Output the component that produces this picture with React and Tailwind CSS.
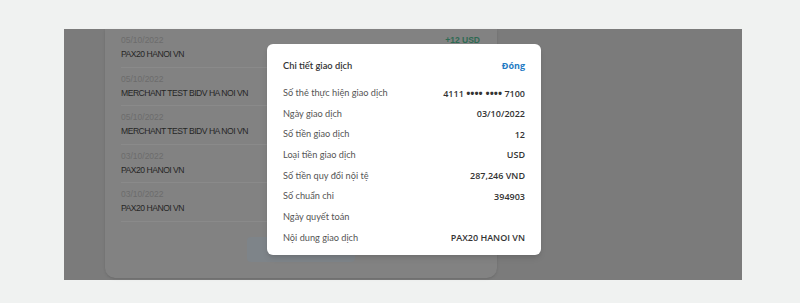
const items = [
  { date: "05/10/2022", name: "PAX20 HANOI VN", amount: "+12 USD" },
  { date: "05/10/2022", name: "MERCHANT TEST BIDV HA NOI VN", amount: "+12 USD" },
  { date: "05/10/2022", name: "MERCHANT TEST BIDV HA NOI VN", amount: "+12 USD" },
  { date: "03/10/2022", name: "PAX20 HANOI VN", amount: "+12 USD" },
  { date: "03/10/2022", name: "PAX20 HANOI VN", amount: "+12 USD" },
];

const details = [
  ["Số thẻ thực hiện giao dịch", "4111 •••• •••• 7100"],
  ["Ngày giao dịch", "03/10/2022"],
  ["Số tiền giao dịch", "12"],
  ["Loại tiền giao dịch", "USD"],
  ["Số tiền quy đổi nội tệ", "287,246 VND"],
  ["Số chuẩn chi", "394903"],
  ["Ngày quyết toán", ""],
  ["Nội dung giao dịch", "PAX20 HANOI VN"],
];

function DetailModal() {
  return (
    <div className="absolute left-[203px] top-[15px] w-[274px] h-[211px] bg-white rounded-[6px] shadow-md px-4 pt-3 font-['Lato',sans-serif]">
      <div className="flex items-center justify-between h-5">
        <span className="text-[9.3px] font-semibold text-[#333]">Chi tiết giao dịch</span>
        <span className="text-[9px] font-bold text-[#1f7bc4] font-['Open_Sans',sans-serif]">Đóng</span>
      </div>
      <div className="mt-[6.6px]">
        {details.map(([label, value]) => (
          <div key={label} className="flex items-center justify-between h-[20.7px]">
            <span className="text-[9.2px] text-[#555]">{label}</span>
            <span className="text-[9px] font-semibold text-[#333] font-['Open_Sans',sans-serif]">
              {value.includes("•") ? (
                <>
                  4111 <span className="text-[11px] font-bold">•••• ••••</span> 7100
                </>
              ) : (
                value
              )}
            </span>
          </div>
        ))}
      </div>
    </div>
  );
}

export default function App() {
  return (
    <div className="w-[800px] h-[303px] bg-[#f0f2f1] pt-[29px] pl-16">
      <div className="relative w-[678px] h-[251px] bg-[#7b7b7b]">
        <div className="ml-[41px] w-[392px] h-[249px] bg-[#828282] rounded-b-[10px] shadow-sm px-4 font-['Liberation_Sans',sans-serif] flex flex-col">
          {items.map((it, i) => (
            <div key={i} className="flex justify-between border-b border-[#8a8a8a] h-[38.5px] pt-[5px]">
              <div>
                <div className="text-[8.5px] text-[#6c6c6c] leading-[12px]">{it.date}</div>
                <div className="text-[8.6px] tracking-[-0.5px] text-[#262626] leading-[12px] mt-[2px]">{it.name}</div>
              </div>
              <div className="text-[8.5px] font-semibold text-[#2d6a52] leading-[12px] pr-[1px]">{it.amount}</div>
            </div>
          ))}
          <div className="mt-auto mb-[16px] self-center w-[108px] h-[25px] rounded-[4px] bg-[#7e8489]" />
        </div>
        <DetailModal />
      </div>
    </div>
  );
}
